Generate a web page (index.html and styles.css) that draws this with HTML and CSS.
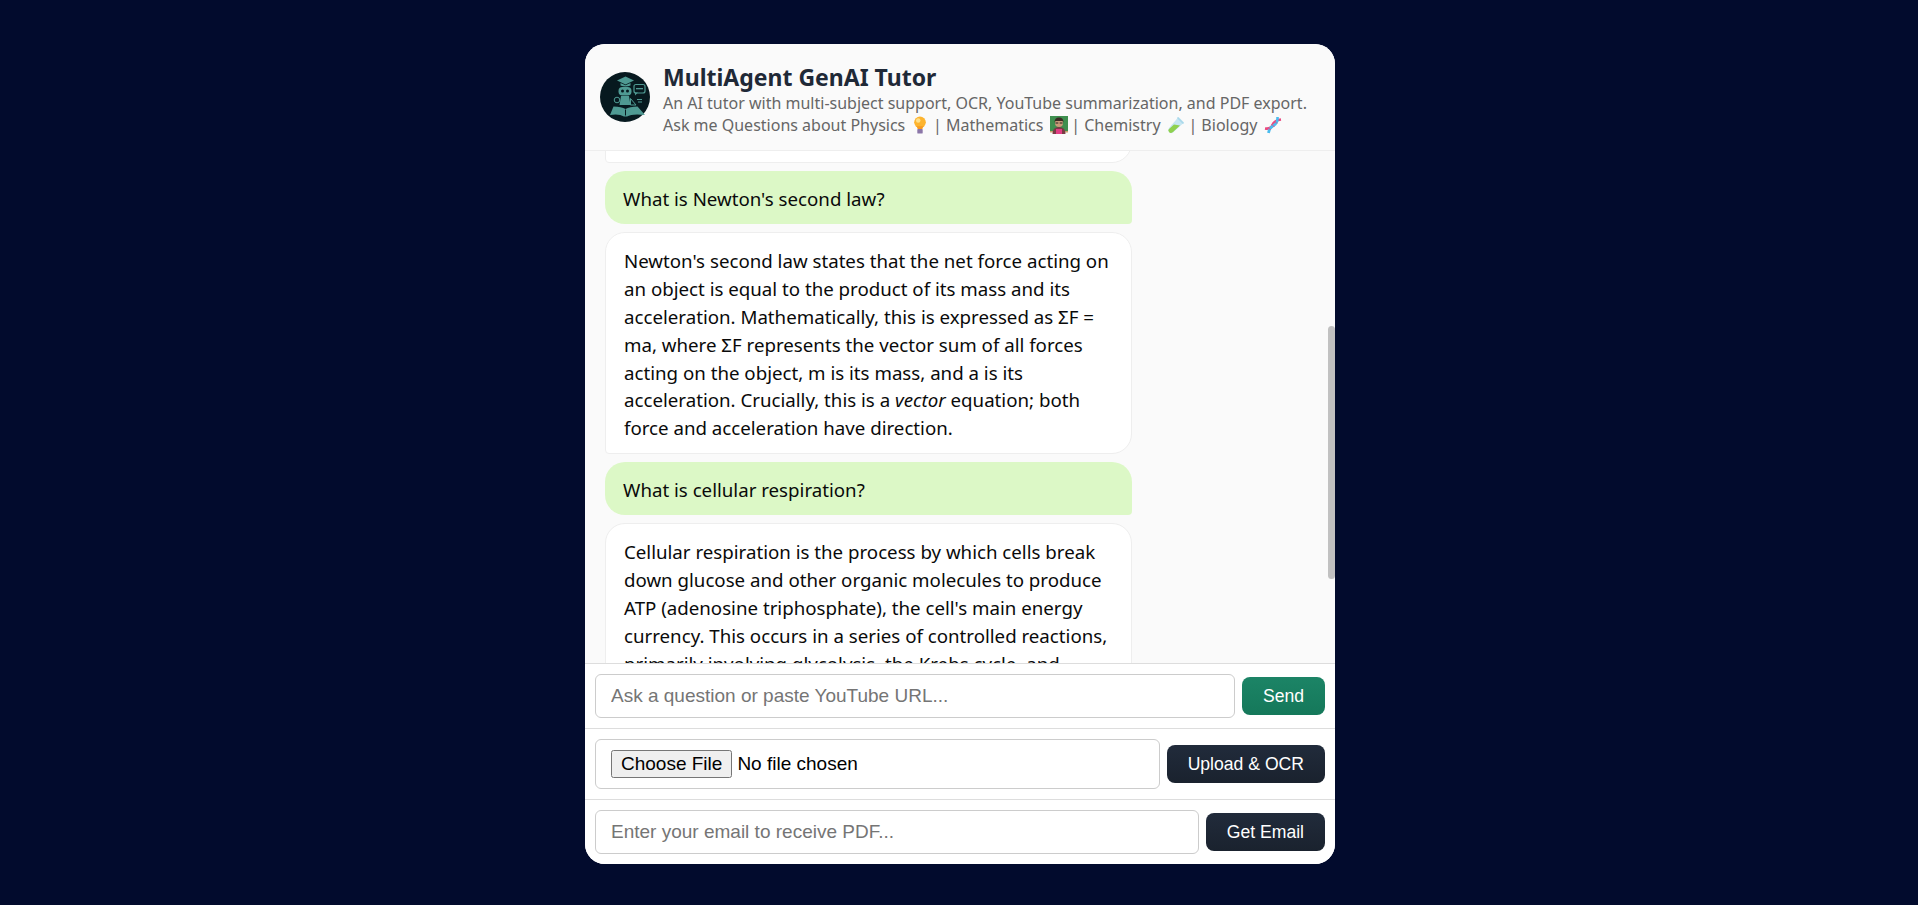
FILE: index.html
```html
<!DOCTYPE html>
<html lang="en">
<head>
<meta charset="utf-8">
<title>MultiAgent GenAI Tutor</title>
<link rel="stylesheet" href="styles.css">
</head>
<body>
<main class="card">
  <header class="head">
    <svg class="avatar" viewBox="0 0 50 50" aria-hidden="true">
      <circle cx="25" cy="25" r="25" fill="#07191f"/>
      <g fill="#4f9a93">
        <path d="M17 8.500 25.500 4.500 34 8.500 25.500 12.500Z"/>
        <path d="M20.500 11v2.400q5 2 10 0V11l-5 2.200Z"/>
        <rect x="18.500" y="15" width="13" height="8.500" rx="4"/>
        <rect x="34" y="12.500" width="11" height="8.500" rx="2" fill="none" stroke="#4f9a93" stroke-width="1.200"/>
        <path d="M35 20.500h3l-3 3Z"/>
        <rect x="36" y="16" width="7" height="1.300"/>
        <path d="M21 24h8l1.500 9h-11Z"/>
        <circle cx="17" cy="28" r="2.800" fill="none" stroke="#4f9a93"/>
        <path d="M30.500 33V26.500L36 33Z" fill="none" stroke="#4f9a93"/>
        <path d="M37 27.500h5M38 30h4" stroke="#4f9a93" fill="none"/>
        <path d="M10 43 13.500 34.500q8 0 12 2.500 4-2.500 12-2.500L45 43q-13-1.500-18 1.500h-3Q19 41.500 10 43Z"/>
      </g>
      <circle cx="22.500" cy="19" r="1.500" fill="#07191f"/>
      <circle cx="27.500" cy="19" r="1.500" fill="#07191f"/>
      <path d="M25.500 37.500V43.500" stroke="#07191f" fill="none"/>
    </svg>
    <div class="intro">
      <h1 class="title">MultiAgent GenAI Tutor</h1>
      <p class="sub">An AI tutor with multi-subject support, OCR, YouTube summarization, and PDF export.</p>
      <p class="sub">Ask me Questions about Physics
        <svg class="emoji" viewBox="0 0 18 20" aria-hidden="true"><circle cx="9" cy="7" r="6.500" fill="#fdb42f"/><circle cx="7" cy="5" r="2.500" fill="#ffe08a"/><path d="M5.500 11.500h7l-1 3.500h-5Z" fill="#f79a1f"/><rect x="6" y="14.500" width="6" height="5" rx="1" fill="#8b76a8"/></svg>
        | Mathematics
        <svg class="emoji" viewBox="0 0 18 18" aria-hidden="true"><rect width="18" height="16" fill="#3f8f4f"/><rect y="15" width="18" height="1.500" fill="#caa26d"/><path d="M2.500 18q0-7 6.500-7t6.500 7Z" fill="#7a3b45"/><rect x="6" y="13" width="6" height="5" fill="#e23d83"/><circle cx="9" cy="7" r="4" fill="#c99a78"/><path d="M4.500 6.500Q4.500 1.500 9 1.500t4.500 5L12.500 5h-7Z" fill="#3b2a24"/><path d="M5.500 7h2.800M9.700 7h2.800" stroke="#222" fill="none"/></svg>
        | Chemistry
        <svg class="emoji" viewBox="0 0 18 18" aria-hidden="true"><path d="M11.500 1 17 6.500 6 16.500Q3.500 18 2 16T2 12Z" fill="#c6e6f2"/><path d="M7 8.500 13 9.500 6 16Q3.500 18 2 16T2 13Z" fill="#8fd14f"/><path d="M10.500 1.500 16.500 7.500" stroke="#a9d8ea" stroke-width="1.500" fill="none"/></svg>
        | Biology
        <svg class="emoji" viewBox="0 0 18 18" aria-hidden="true"><path d="M1 12.500Q7 13.500 8.500 9T17 3.500" fill="none" stroke="#ea4a80" stroke-width="2.600"/><path d="M4.500 17Q5 12 9.500 9.500T13.500 1" fill="none" stroke="#4bbcee" stroke-width="2.600"/><path d="M4 11l2.500 3M7.500 8l3 3M10.500 5l2.500 2.500" stroke="#ea4a80" fill="none"/></svg>
      </p>
    </div>
  </header>

  <section class="chat">
    <div class="msg bot stub"></div>
    <div class="msg user">What is Newton's second law?</div>
    <div class="msg bot">Newton's second law states that the net force acting on an object is equal to the product of its mass and its acceleration. Mathematically, this is expressed as ΣF = ma, where ΣF represents the vector sum of all forces acting on the object, m is its mass, and a is its acceleration. Crucially, this is a <em>vector</em> equation; both force and acceleration have direction.</div>
    <div class="msg user">What is cellular respiration?</div>
    <div class="msg bot">Cellular respiration is the process by which cells break down glucose and other organic molecules to produce ATP (adenosine triphosphate), the cell's main energy currency. This occurs in a series of controlled reactions, primarily involving glycolysis, the Krebs cycle, and oxidative phosphorylation.</div>
    <div class="thumb"></div>
  </section>

  <form class="row">
    <input class="field" type="text" placeholder="Ask a question or paste YouTube URL...">
    <button class="btn send" type="button">Send</button>
  </form>
  <form class="row">
    <input class="field file" type="file">
    <button class="btn" type="button">Upload &amp; OCR</button>
  </form>
  <form class="row">
    <input class="field" type="email" placeholder="Enter your email to receive PDF...">
    <button class="btn" type="button">Get Email</button>
  </form>
</main>
</body>
</html>
```

FILE: styles.css
```css
* { box-sizing: border-box; }
html, body { height: 100%; }
body {
  margin: 0;
  background: #020b2d;
  font-family: "Noto Sans", "Open Sans", sans-serif;
  display: flex;
  justify-content: center;
  padding: 44px 0 0 2px;
  overflow: hidden;
}
.card {
  width: 750px;
  height: 820px;
  background: #fff;
  border-radius: 20px;
  overflow: hidden;
  display: flex;
  flex-direction: column;
}
.head {
  flex: none;
  height: 107px;
  display: flex;
  align-items: center;
  gap: 13px;
  padding: 0 15px;
  background: #fafafa;
  border-bottom: 1px solid #eee;
}
.avatar { width: 50px; height: 50px; flex: none; }
.intro { padding-top: 4px; }
.title {
  margin: 0;
  font-size: 23px;
  line-height: 30px;
  font-weight: 700;
  color: #1f2937;
}
.sub {
  margin: 0;
  font-size: 16px;
  line-height: 22px;
  color: #666;
  white-space: nowrap;
}
.emoji { width: 18px; height: 18px; vertical-align: -3px; margin: 0 -0.500px 0 2px; }
.chat {
  position: relative;
  flex: 1;
  min-height: 0;
  overflow: hidden;
  background: #fafafa;
  padding: 0 20px;
  display: flex;
  flex-direction: column;
  gap: 8px;
}
.msg {
  flex: none;
  width: 527px;
  font-size: 18.700px;
  line-height: 27.900px;
  color: #0a0a0a;
}
.user {
  background: #dcf8c6;
  padding: 14px 18px 11px;
  border-radius: 20px 20px 4px 20px;
}
.bot {
  background: #fff;
  border: 1px solid #eee;
  padding: 14px 18px 11px;
  border-radius: 20px 20px 20px 4px;
}
.stub { height: 40px; margin-top: -28px; padding: 0; }
.thumb {
  position: absolute;
  top: 175px;
  right: 0;
  width: 7px;
  height: 253px;
  border-radius: 4px;
  background: #c1c1c1;
}
.row {
  flex: none;
  display: flex;
  align-items: center;
  gap: 7px;
  padding: 10px;
  border-top: 1px solid #ddd;
  background: #fff;
}
.field {
  flex: 1;
  min-width: 0;
  height: 44px;
  padding: 0 15px;
  font-family: "Liberation Sans", Arial, sans-serif;
  font-size: 19px;
  color: #000;
  background: #fff;
  border: 1px solid #ccc;
  border-radius: 6px;
}
.file { height: 50px; padding: 10px 15px; }
.file::file-selector-button { padding: 1px 8px; margin-inline-end: 5px; }
.btn {
  flex: none;
  height: 38px;
  padding: 0 21px;
  font-family: "Liberation Sans", Arial, sans-serif;
  font-size: 17.600px;
  color: #fff;
  border: 0;
  border-radius: 8px;
  background: linear-gradient(#212b3b, #1a222e);
}
.send { background: linear-gradient(#1c8466, #15785a); }
```
